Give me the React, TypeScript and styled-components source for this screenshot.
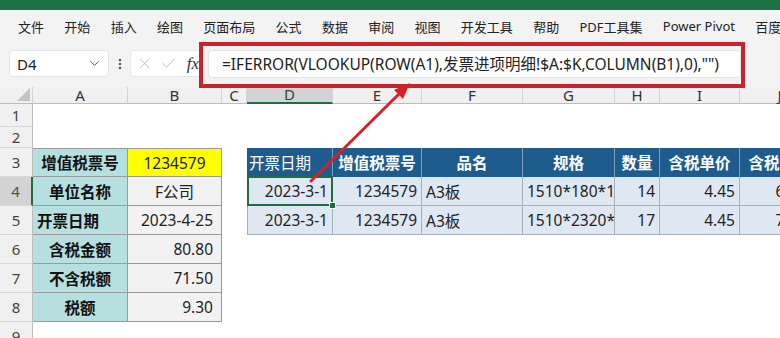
import React from 'react'
import styled, { createGlobalStyle, css } from 'styled-components'
import { X, Check, ChevronDown, EllipsisVertical } from 'lucide-react'

const GlobalStyle = createGlobalStyle`
  html, body { margin: 0; padding: 0; background: #fff; }
  body { font-family: "Noto Sans", "Noto Sans CJK SC", sans-serif; color: #222; }
`

const Window = styled.div`
  position: relative;
  width: 780px;
  height: 338px;
  overflow: hidden;
  background: #fff;
  display: flex;
  flex-direction: column;
`

const TitleStrip = styled.div`
  height: 10px;
  flex-shrink: 0;
  background: #1d7044;
`

const MenuBar = styled.div`
  height: 30px;
  flex-shrink: 0;
  box-sizing: border-box;
  padding: 2px 0 0 18px;
  display: flex;
  align-items: center;
  gap: 20.3px;
  background: #f3f3f3;
  font-size: 13px;
  color: #222;
  white-space: nowrap;
`

const MenuItem = styled.span``

const FormulaRow = styled.div`
  height: 47px;
  flex-shrink: 0;
  display: flex;
  align-items: center;
  padding-left: 9px;
  background: #f3f3f3;
`

const NameBox = styled.div`
  width: 100px;
  height: 27px;
  box-sizing: border-box;
  display: flex;
  align-items: center;
  justify-content: space-between;
  padding: 0 6px 0 7px;
  background: #fff;
  border: 1px solid #e4e4e4;
  border-radius: 4px;
  font-size: 15px;
`

const Dots = styled.div`
  width: 21px;
  display: flex;
  justify-content: center;
  color: #555;
`

const FxBox = styled.div`
  width: 69px;
  height: 27px;
  box-sizing: border-box;
  display: flex;
  align-items: center;
  gap: 7px;
  padding-left: 5px;
  background: #fff;
  border: 1px solid #e8e8e8;
  border-right: none;
  border-radius: 4px 0 0 4px;
  color: #b8b8b8;
`

const Fx = styled.span`
  font-family: "Liberation Serif", "DejaVu Serif", serif;
  font-style: italic;
  font-size: 17px;
  color: #333;
  margin-left: 2px;
`

const FormulaInput = styled.div`
  margin-left: 9px;
  width: 533px;
  height: 28px;
  box-sizing: border-box;
  display: flex;
  align-items: center;
  padding-left: 13px;
  background: #fff;
  border: 1px solid #e4e4e4;
  border-radius: 4px;
  font-size: 15.5px;
  white-space: nowrap;
`

const Sheet = styled.div`
  display: grid;
  grid-template-columns: 33px 95px 94px 25px 86px 89px 101px 92px 45px 80px 80px 80px;
  grid-template-rows: 17px 23px 21px repeat(7, 29px);
  font-size: 15.5px;
`

const Corner = styled.div`
  position: relative;
  background: #f0f0f0;
  border-right: 1px solid #d4d4d4;
  border-bottom: 1px solid #bdbdbd;
  &::after {
    content: '';
    position: absolute;
    right: 2px;
    bottom: 2px;
    width: 13px;
    height: 13px;
    background: #c4c4c4;
    clip-path: polygon(100% 0, 100% 100%, 0 100%);
  }
`

const ColHead = styled.div<{ $sel?: boolean }>`
  box-sizing: border-box;
  display: flex;
  align-items: center;
  justify-content: center;
  background: #f0f0f0;
  border-right: 1px solid #d4d4d4;
  border-bottom: 1px solid #bdbdbd;
  color: #333;
  font-size: 15px;
  line-height: 1;
  ${p => p.$sel && css`
    background: #d3d3d3;
    border-bottom: 2px solid #1e6e42;
    color: #2b4a36;
  `}
`

const RowHead = styled.div<{ $sel?: boolean }>`
  box-sizing: border-box;
  display: flex;
  align-items: center;
  justify-content: center;
  background: #f0f0f0;
  border-right: 1px solid #bdbdbd;
  border-bottom: 1px solid #d9d9d9;
  color: #444;
  font-size: 15px;
  ${p => p.$sel && css`
    background: #d3d3d3;
    border-right: 2px solid #1e6e42;
    color: #3c5a46;
  `}
`

type Kind = 'blank' | 'label' | 'value' | 'yellow' | 'head' | 'data'
type Align = 'left' | 'center' | 'right'

const kindStyle: Record<Kind, ReturnType<typeof css>> = {
  blank: css`background: #fff;`,
  label: css`
    background: #b6dfdf;
    border-right: 1px solid #9a9a9a;
    border-bottom: 1px solid #9a9a9a;
    font-weight: 700;
    color: #111;
    padding: 0 4px;
  `,
  value: css`
    background: #f2f2f2;
    border-right: 1px solid #9a9a9a;
    border-bottom: 1px solid #9a9a9a;
    padding: 0 8px;
  `,
  yellow: css`
    background: #ffff00;
    border-right: 1px solid #9a9a9a;
    border-bottom: 1px solid #9a9a9a;
    padding: 0 8px;
  `,
  head: css`
    background: #1f5c8e;
    border-right: 1px solid #7f9ebd;
    color: #fff;
    font-weight: 700;
    padding: 0 2px;
  `,
  data: css`
    background: #dfe8f2;
    border-right: 1px solid #a6b0bc;
    border-bottom: 1px solid #a6b0bc;
    padding: 0 4px;
  `,
}

const Cell = styled.div<{ $kind: Kind; $align: Align; $top?: boolean; $edge?: boolean; $light?: boolean; $sel?: boolean }>`
  position: relative;
  box-sizing: border-box;
  display: flex;
  align-items: center;
  justify-content: ${p => (p.$align === 'left' ? 'flex-start' : p.$align === 'right' ? 'flex-end' : 'center')};
  white-space: nowrap;
  overflow: ${p => (p.$sel ? 'visible' : 'hidden')};
  ${p => kindStyle[p.$kind]}
  ${p => p.$top && css`border-top: 1px solid #9a9a9a;`}
  ${p => p.$edge && css`border-left: 1px solid #a6b0bc;`}
  ${p => p.$light && css`font-weight: 400;`}
  ${p => p.$sel && css`
    &::after {
      content: '';
      position: absolute;
      inset: -1px -1px -1px -1px;
      border: 2px solid #1e6e42;
      pointer-events: none;
    }
    &::before {
      content: '';
      position: absolute;
      right: -4px;
      bottom: -4px;
      width: 5px;
      height: 5px;
      background: #1e6e42;
      border: 1px solid #fff;
      z-index: 2;
    }
  `}
`

const RedFrame = styled.div`
  position: absolute;
  left: 199px;
  top: 42px;
  width: 546px;
  height: 46px;
  box-sizing: border-box;
  border: 4px solid #c8242b;
  pointer-events: none;
`

const ArrowLayer = styled.svg`
  position: absolute;
  left: 0;
  top: 0;
  pointer-events: none;
`

interface CellDef {
  text?: string
  kind: Kind
  align?: Align
  top?: boolean
  edge?: boolean
  light?: boolean
  sel?: boolean
}

const blank: CellDef = { kind: 'blank' }
const blanks = (n: number) => Array.from({ length: n }, () => blank)

const lab = (text: string, align: Align = 'center', top = false): CellDef => ({ text, kind: 'label', align, top })
const val = (text: string, align: Align = 'right'): CellDef => ({ text, kind: 'value', align })
const hd = (text: string): CellDef => ({ text, kind: 'head', align: 'center' })
const dt = (text: string, align: Align = 'right'): CellDef => ({ text, kind: 'data', align })

const menus = ['文件', '开始', '插入', '绘图', '页面布局', '公式', '数据', '审阅', '视图', '开发工具', '帮助', 'PDF工具集', 'Power Pivot', '百度网盘']
const columns = ['A', 'B', 'C', 'D', 'E', 'F', 'G', 'H', 'I', 'J', 'K']

const rows: CellDef[][] = [
  blanks(10),
  blanks(10),
  [
    lab('增值税票号', 'center', true),
    { text: '1234579', kind: 'yellow', align: 'center', top: true },
    blank,
    { text: '开票日期', kind: 'head', align: 'left', light: true },
    hd('增值税票号'), hd('品名'), hd('规格'), hd('数量'), hd('含税单价'), hd('含税金额'),
  ],
  [
    lab('单位名称'), val('F公司', 'center'), blank,
    { ...dt('2023-3-1'), edge: true, sel: true },
    dt('1234579'), dt('A3板', 'left'), dt('1510*180*1', 'left'), dt('14'), dt('4.45'), dt('62.30'),
  ],
  [
    lab('开票日期', 'left'), val('2023-4-25'), blank,
    { ...dt('2023-3-1'), edge: true },
    dt('1234579'), dt('A3板', 'left'), dt('1510*2320*1', 'left'), dt('17'), dt('4.45'), dt('75.65'),
  ],
  [lab('含税金额'), val('80.80'), ...blanks(8)],
  [lab('不含税额'), val('71.50'), ...blanks(8)],
  [lab('税额'), val('9.30'), ...blanks(8)],
  blanks(10),
]

export default function App() {
  return (
    <Window>
      <GlobalStyle />
      <TitleStrip />
      <MenuBar>
        {menus.map(m => <MenuItem key={m}>{m}</MenuItem>)}
      </MenuBar>
      <FormulaRow>
        <NameBox>
          D4
          <ChevronDown size={15} strokeWidth={1.6} color="#555" />
        </NameBox>
        <Dots><EllipsisVertical size={14} strokeWidth={2.4} /></Dots>
        <FxBox>
          <X size={19} strokeWidth={1.3} />
          <Check size={19} strokeWidth={1.3} />
          <Fx>fx</Fx>
        </FxBox>
        <FormulaInput>=IFERROR(VLOOKUP(ROW(A1),发票进项明细!$A:$K,COLUMN(B1),0),"")</FormulaInput>
      </FormulaRow>
      <Sheet>
        <Corner />
        {columns.map(c => <ColHead key={c} $sel={c === 'D'}>{c}</ColHead>)}
        {rows.map((r, i) => (
          <React.Fragment key={i}>
            <RowHead $sel={i === 3}>{i + 1}</RowHead>
            {r.map((c, j) => (
              <Cell key={j} $kind={c.kind} $align={c.align ?? 'left'} $top={c.top} $edge={c.edge} $light={c.light} $sel={c.sel}>
                {c.text}
              </Cell>
            ))}
            <Cell $kind="blank" $align="left" />
          </React.Fragment>
        ))}
      </Sheet>
      <RedFrame />
      <ArrowLayer width="780" height="338" viewBox="0 0 780 338">
        <line x1="311" y1="181" x2="400" y2="93" stroke="#d3222a" strokeWidth="3" strokeLinecap="round" />
        <polygon points="410,83 403,99 394,90" fill="#d3222a" />
      </ArrowLayer>
    </Window>
  )
}
